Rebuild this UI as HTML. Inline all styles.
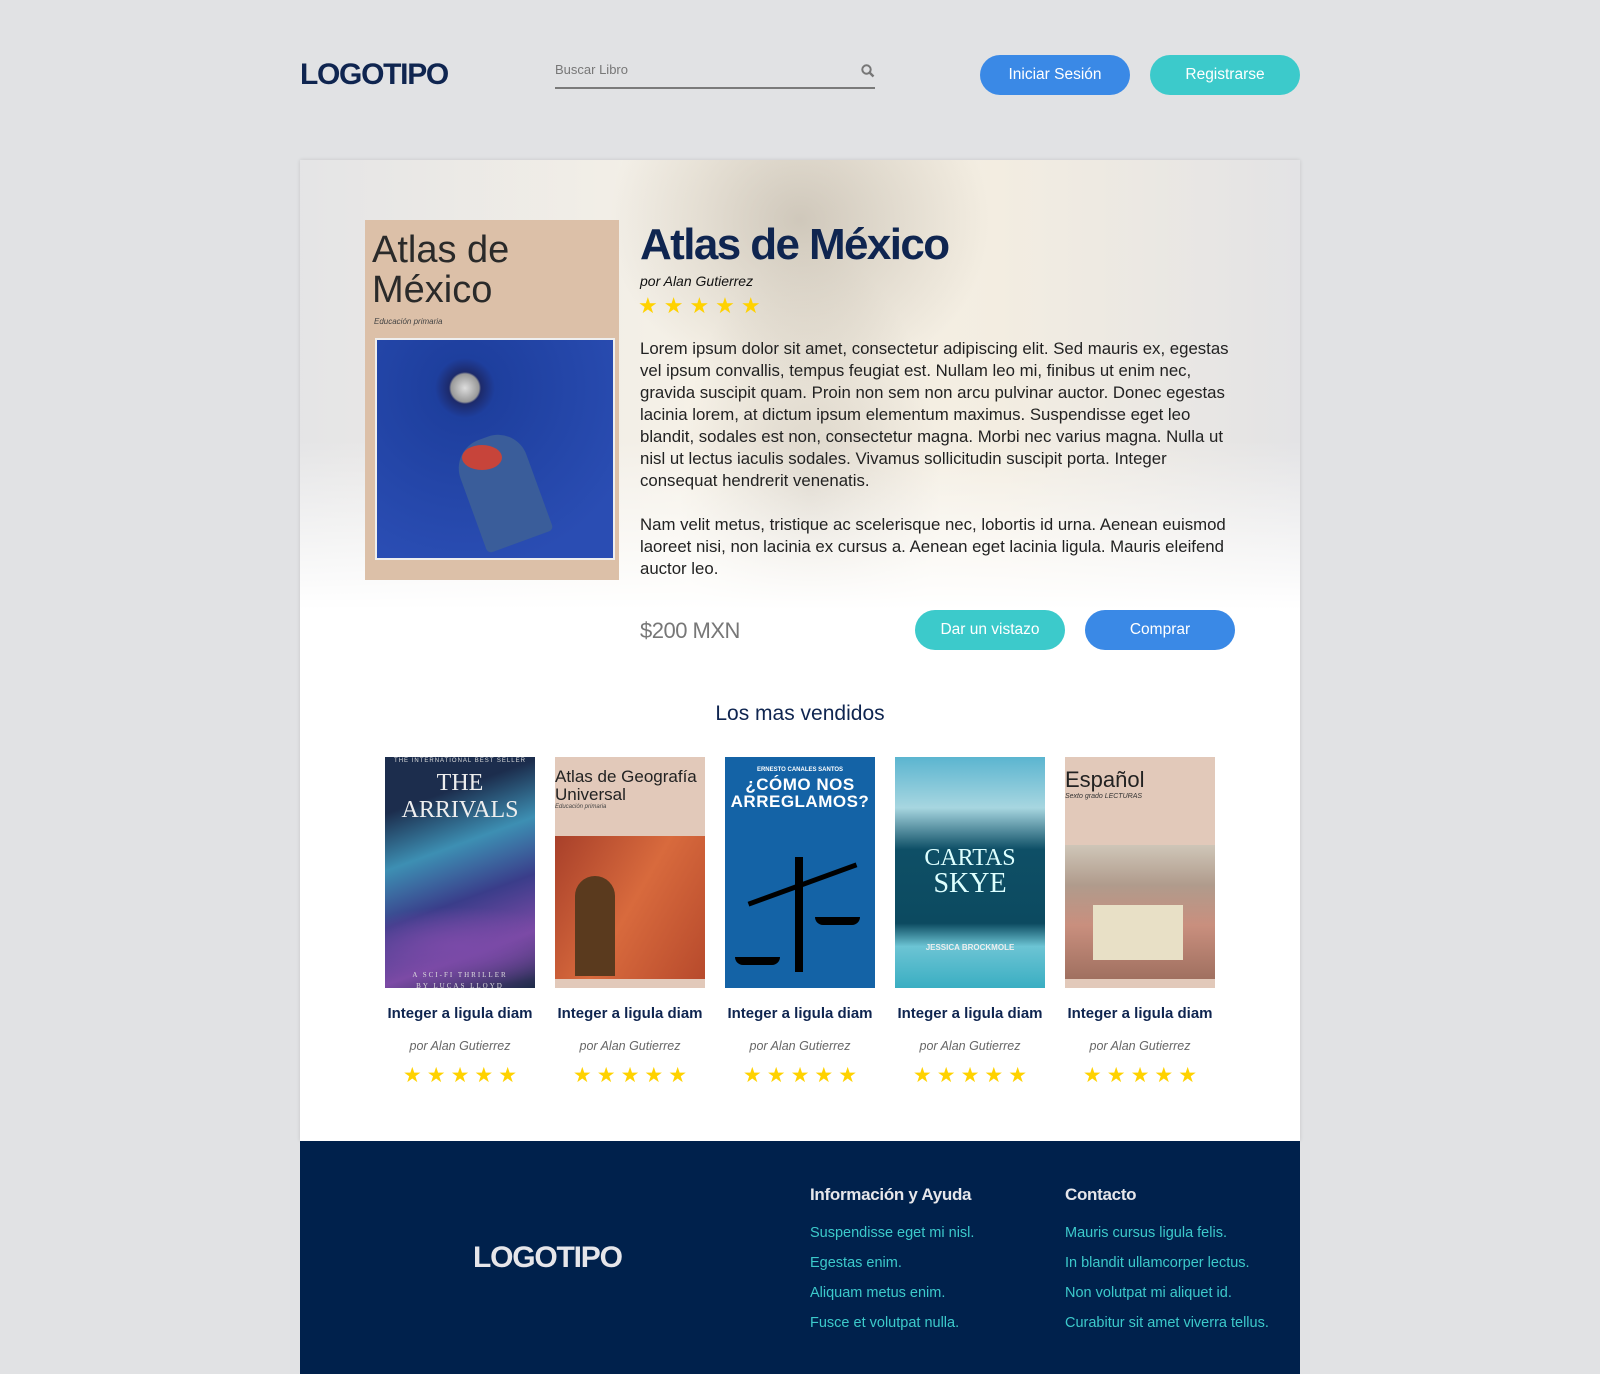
<!DOCTYPE html>
<html><head><meta charset="utf-8"><style>
*{margin:0;padding:0;box-sizing:border-box}
body{width:1600px;height:1374px;background:#e1e2e4;font-family:"Liberation Sans",sans-serif;position:relative;overflow:hidden}
.a{position:absolute}
.logo{left:300px;top:58px;font-size:30px;font-weight:bold;color:#0f2550;letter-spacing:-1.3px}
.btn{border-radius:20px;color:#fff;font-size:15.5px;text-align:center;line-height:40px;height:40px;width:150px}
.blue{background:#3a89e6}.teal{background:#3ccacb}
.card{left:300px;top:160px;width:1000px;height:981px;background:#fff;overflow:hidden;box-shadow:0 0 4px rgba(0,0,0,.12)}
.hero{left:0;top:0;width:1000px;height:460px;background:
radial-gradient(ellipse 190px 170px at 500px 60px,rgba(170,160,145,.5),rgba(170,160,145,0) 100%),
radial-gradient(ellipse 130px 240px at 510px 330px,rgba(160,150,135,.3),rgba(160,150,135,0) 100%),
linear-gradient(90deg,rgba(222,222,224,.8),rgba(240,232,215,.6) 40%,rgba(235,225,205,.6) 70%,rgba(215,215,218,.7));}
.fade{left:0;top:280px;width:1000px;height:200px;background:linear-gradient(rgba(255,255,255,0),#fff 85%)}
.p{font-size:16.8px;line-height:22px;color:#222}
.navy{color:#0f2550}
.stars{color:#ffd200;letter-spacing:6px;font-size:22px}
.cov{width:150px;height:231px;overflow:hidden}
.bt{width:170px;text-align:center;font-weight:bold;font-size:15px;color:#0f2550}
.ba{width:170px;text-align:center;font-style:italic;font-size:12.5px;color:#666}
.bs{width:170px;text-align:center;color:#ffd200;font-size:21px;letter-spacing:5px;padding-left:5px}
.foot{left:300px;top:1141px;width:1000px;height:233px;background:#00214c}
.fl{color:#3ccacb;font-size:14.5px}
</style></head><body>
<div class="a logo">LOGOTIPO</div>
<div class="a" style="left:555px;top:62px;font-size:13px;color:#777">Buscar Libro</div>
<svg class="a" style="left:861px;top:64px" width="14" height="14" viewBox="0 0 14 14"><circle cx="5.5" cy="5.5" r="4.2" stroke="#777" stroke-width="2" fill="none"/><path d="M8.5 8.5L12.5 12.5" stroke="#777" stroke-width="2.4"/></svg>
<div class="a" style="left:555px;top:87px;width:320px;height:2px;background:#7a7a7a"></div>
<div class="a btn blue" style="left:980px;top:55px">Iniciar Sesión</div>
<div class="a btn teal" style="left:1150px;top:55px">Registrarse</div>

<div class="a card">
 <div class="a hero"></div><div class="a fade"></div>
 <div class="a" style="left:65px;top:60px;width:254px;height:360px;background:#dcc0a8">
  <div class="a" style="left:7px;top:10px;font-size:38px;color:#2a2a2a;line-height:40px">Atlas de<br>México</div>
  <div class="a" style="left:9px;top:97px;font-size:8px;font-style:italic;color:#444">Educación primaria</div>
  <div class="a" style="left:10px;top:118px;width:240px;height:222px;border:2px solid #eee;background:radial-gradient(circle at 88px 48px,#ddd 0,#999 14px,#1d2a6b 16px,#1e3f9e 30px,#2a4db3 80%)">
   <div class="a" style="left:90px;top:95px;width:70px;height:110px;background:#3a5d9a;border-radius:30px 30px 5px 5px;transform:rotate(-20deg)"></div>
   <div class="a" style="left:85px;top:105px;width:40px;height:25px;background:#c7443a;border-radius:50%"></div>
  </div>
 </div>
 <div class="a navy" style="left:340px;top:60px;font-size:44px;font-weight:bold;letter-spacing:-1.6px">Atlas de México</div>
 <div class="a" style="left:340px;top:113px;font-size:14px;font-style:italic;color:#111">por Alan Gutierrez</div>
 <div class="a stars" style="left:338px;top:133px">★★★★★</div>
 <div class="a p" style="left:340px;top:178px;width:600px">Lorem ipsum dolor sit amet, consectetur adipiscing elit. Sed mauris ex, egestas vel ipsum convallis, tempus feugiat est. Nullam leo mi, finibus ut enim nec, gravida suscipit quam. Proin non sem non arcu pulvinar auctor. Donec egestas lacinia lorem, at dictum ipsum elementum maximus. Suspendisse eget leo blandit, sodales est non, consectetur magna. Morbi nec varius magna. Nulla ut nisl ut lectus iaculis sodales. Vivamus sollicitudin suscipit porta. Integer consequat hendrerit venenatis.</div>
 <div class="a p" style="left:340px;top:354px;width:600px">Nam velit metus, tristique ac scelerisque nec, lobortis id urna. Aenean euismod laoreet nisi, non lacinia ex cursus a. Aenean eget lacinia ligula. Mauris eleifend auctor leo.</div>
 <div class="a" style="left:340px;top:458px;font-size:22px;color:#777;letter-spacing:-0.5px">$200 MXN</div>
 <div class="a btn teal" style="left:615px;top:450px">Dar un vistazo</div>
 <div class="a btn blue" style="left:785px;top:450px">Comprar</div>
 <div class="a navy" style="left:0;top:542px;width:1000px;text-align:center;font-size:21px">Los mas vendidos</div>

 <div class="a cov" style="left:85px;top:597px;background:radial-gradient(ellipse 120px 40px at 75px 190px,#7a4aa8,transparent),linear-gradient(160deg,#1c2d4d 20%,#3d8fb3 40%,#3a3d8a 60%,#7c4aa5 80%,#1d2b48)">
  <div style="color:#ddd;font-size:6px;text-align:center;letter-spacing:1px;margin-top:1px">THE INTERNATIONAL BEST SELLER</div>
  <div style="color:#eee;font-family:'Liberation Serif',serif;font-size:24px;text-align:center;line-height:27px;margin-top:6px">THE<br>ARRIVALS</div>
  <div style="color:#ddd;font-family:'Liberation Serif',serif;font-size:7px;text-align:center;letter-spacing:2px;margin-top:146px;line-height:11px">A SCI-FI THRILLER<br>BY LUCAS LLOYD</div>
 </div>
 <div class="a cov" style="left:255px;top:597px;background:#e2c9ba">
  <div style="color:#222;font-size:17px;line-height:18px;margin-top:11px">Atlas de Geografía<br>Universal</div>
  <div style="font-size:6px;font-style:italic;color:#444">Educación primaria</div>
  <div class="a" style="left:0;top:79px;width:150px;height:143px;background:linear-gradient(120deg,#a8402a,#d86a3d 50%,#b74a2c)"><div class="a" style="left:20px;top:40px;width:40px;height:100px;background:#5a3a1e;border-radius:20px 20px 0 0"></div></div>
 </div>
 <div class="a cov" style="left:425px;top:597px;background:#1463a6;color:#fff;text-align:center">
  <div style="font-size:6px;font-weight:bold;margin-top:10px">ERNESTO CANALES SANTOS</div>
  <div style="font-size:17px;font-weight:bold;line-height:17px;margin-top:3px;letter-spacing:.5px">¿CÓMO NOS<br>ARREGLAMOS?</div>
  <div class="a" style="left:70px;top:100px;width:8px;height:115px;background:#000"></div>
  <div class="a" style="left:20px;top:125px;width:115px;height:5px;background:#000;transform:rotate(-20deg)"></div>
  <div class="a" style="left:10px;top:200px;width:45px;height:8px;background:#000;border-radius:0 0 20px 20px"></div>
  <div class="a" style="left:90px;top:160px;width:45px;height:8px;background:#000;border-radius:0 0 20px 20px"></div>
 </div>
 <div class="a cov" style="left:595px;top:597px;background:linear-gradient(#5bb5d0,#a7d6e0 22%,#0e4f66 40%,#0c4a60 72%,#6cc4d4 82%,#3aaec2)">
  <div style="color:#dff;font-family:'Liberation Serif',serif;font-size:24px;text-align:center;margin-top:88px;line-height:26px">CARTAS<br><span style="font-size:28px">SKYE</span></div>
  <div style="color:#eee;font-size:8px;font-weight:bold;text-align:center;margin-top:45px">JESSICA BROCKMOLE</div>
 </div>
 <div class="a cov" style="left:765px;top:597px;background:#e2c9ba">
  <div style="color:#222;font-size:22px;margin-top:10px">Español</div>
  <div style="font-size:7px;font-style:italic;color:#333">Sexto grado LECTURAS</div>
  <div class="a" style="left:0;top:88px;width:150px;height:134px;background:linear-gradient(#cfc6b8,#b09b8c 30%,#c98f7e 60%,#a07060)"><div class="a" style="left:28px;top:60px;width:90px;height:55px;background:#e8e0c6"></div></div>
 </div>

 <div class="a bt" style="left:75px;top:845px">Integer a ligula diam</div>
 <div class="a bt" style="left:245px;top:845px">Integer a ligula diam</div>
 <div class="a bt" style="left:415px;top:845px">Integer a ligula diam</div>
 <div class="a bt" style="left:585px;top:845px">Integer a ligula diam</div>
 <div class="a bt" style="left:755px;top:845px">Integer a ligula diam</div>
 <div class="a ba" style="left:75px;top:879px">por Alan Gutierrez</div>
 <div class="a ba" style="left:245px;top:879px">por Alan Gutierrez</div>
 <div class="a ba" style="left:415px;top:879px">por Alan Gutierrez</div>
 <div class="a ba" style="left:585px;top:879px">por Alan Gutierrez</div>
 <div class="a ba" style="left:755px;top:879px">por Alan Gutierrez</div>
 <div class="a bs" style="left:75px;top:903px">★★★★★</div>
 <div class="a bs" style="left:245px;top:903px">★★★★★</div>
 <div class="a bs" style="left:415px;top:903px">★★★★★</div>
 <div class="a bs" style="left:585px;top:903px">★★★★★</div>
 <div class="a bs" style="left:755px;top:903px">★★★★★</div>
</div>

<div class="a foot">
 <div class="a" style="left:173px;top:100px;font-size:30px;font-weight:bold;color:#e6e6ea;letter-spacing:-1.2px">LOGOTIPO</div>
 <div class="a" style="left:510px;top:44px;font-size:17px;font-weight:bold;color:#e6e6ea;letter-spacing:-0.3px">Información y Ayuda</div>
 <div class="a" style="left:765px;top:44px;font-size:17px;font-weight:bold;color:#e6e6ea;letter-spacing:-0.3px">Contacto</div>
 <div class="a fl" style="left:510px;top:77px;line-height:30px">Suspendisse eget mi nisl.<br>Egestas enim.<br>Aliquam metus enim.<br>Fusce et volutpat nulla.</div>
 <div class="a fl" style="left:765px;top:77px;line-height:30px">Mauris cursus ligula felis.<br>In blandit ullamcorper lectus.<br>Non volutpat mi aliquet id.<br>Curabitur sit amet viverra tellus.</div>
</div>
</body></html>
